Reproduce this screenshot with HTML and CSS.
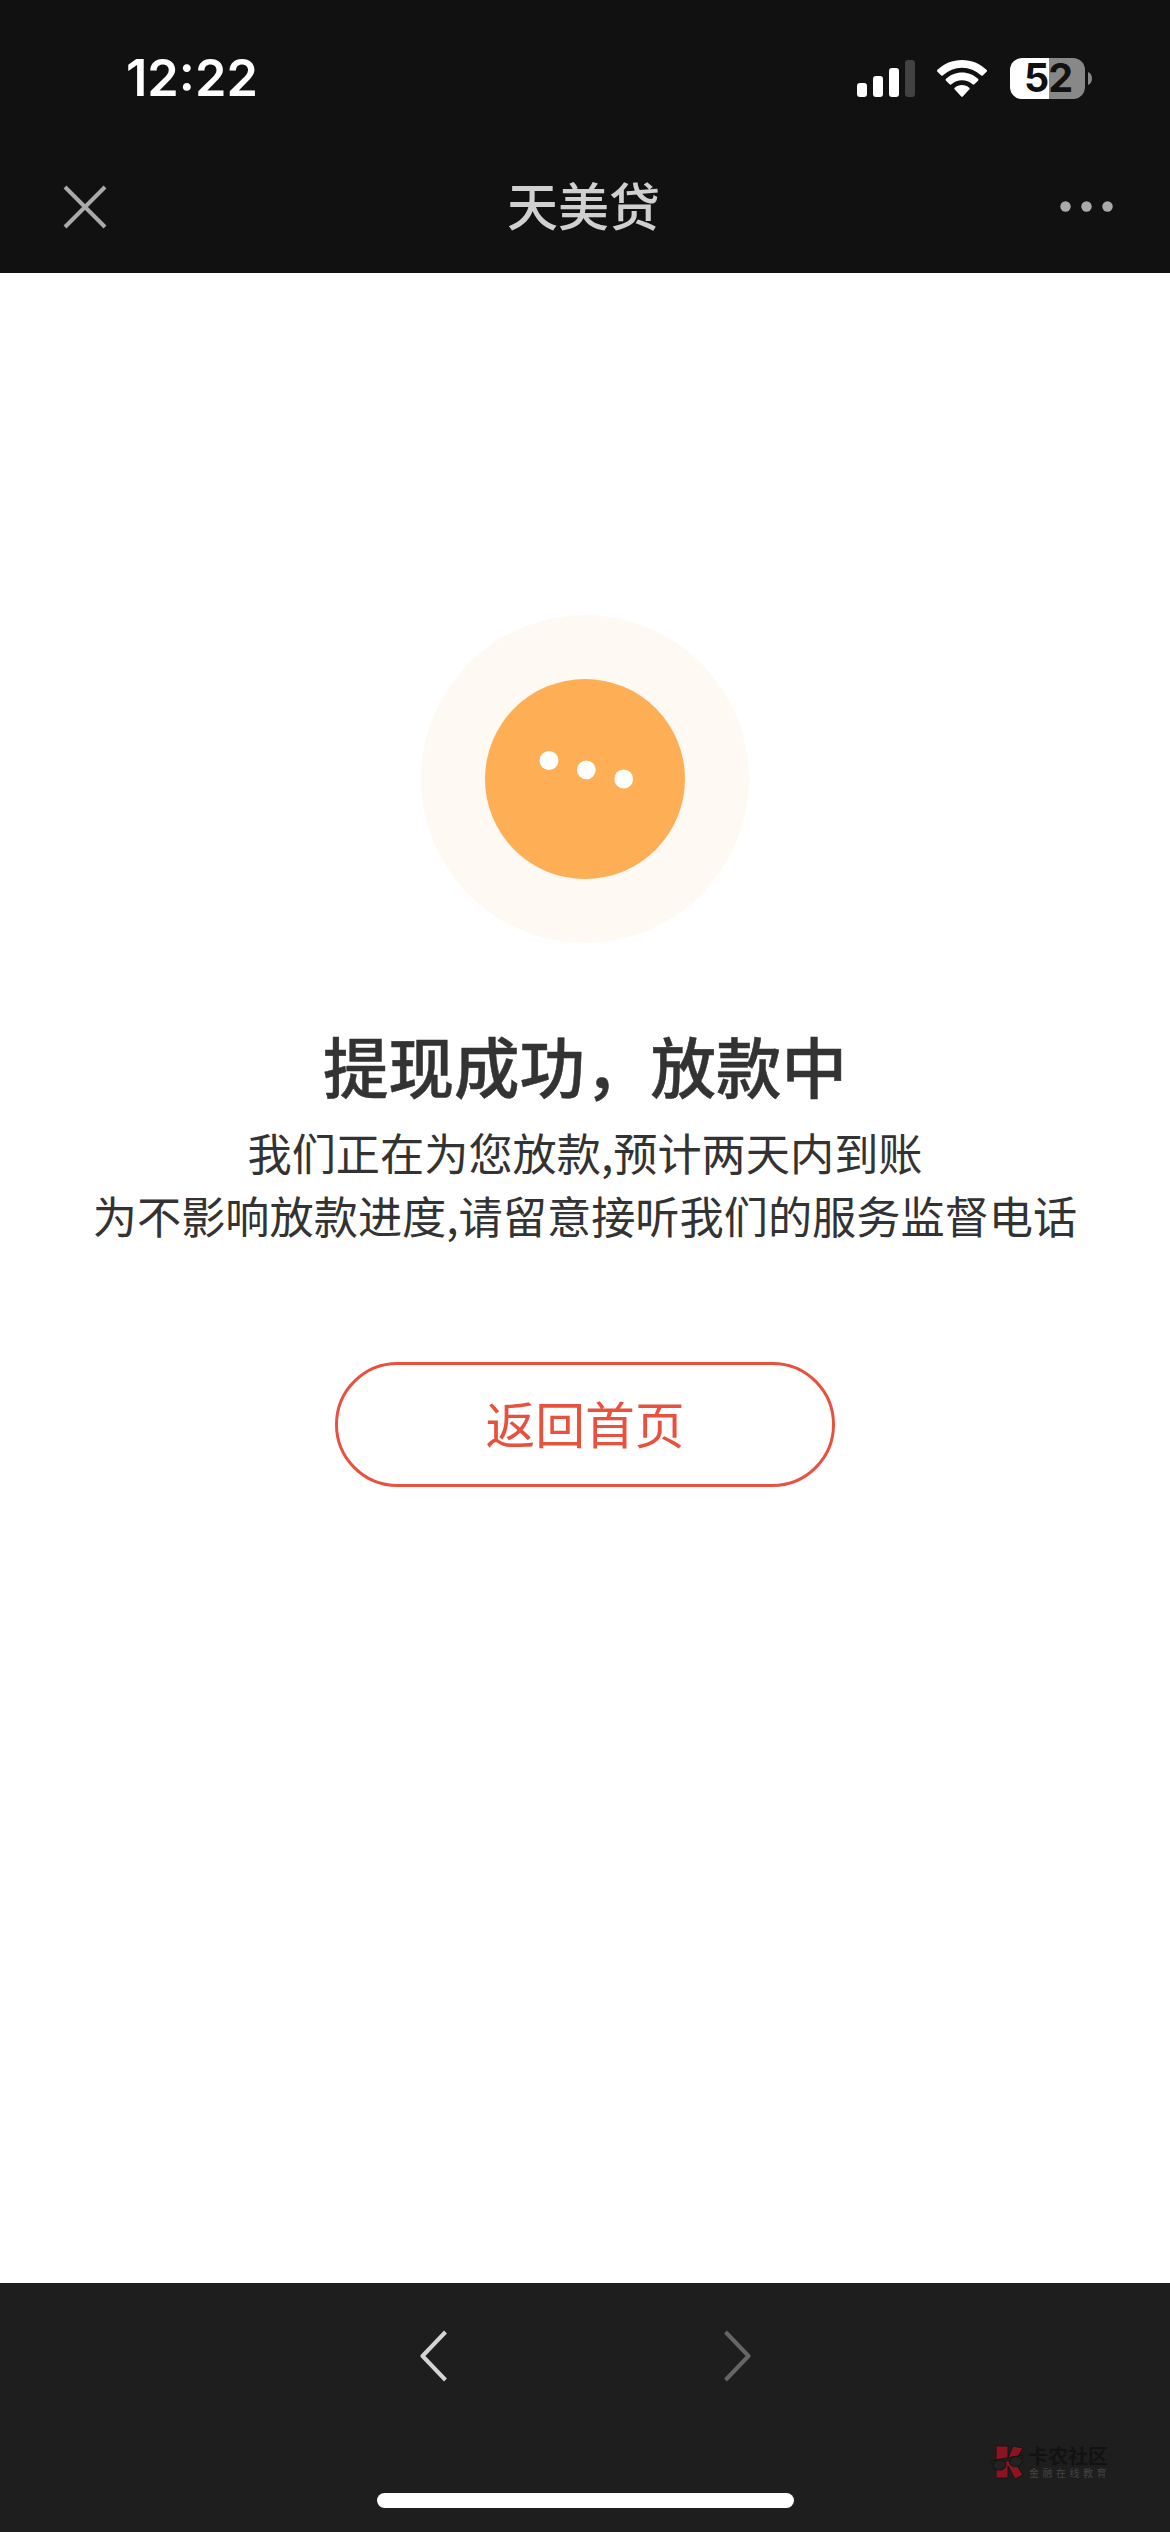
FILE: index.html
```html
<!DOCTYPE html>
<html lang="zh-CN">
<head>
<meta charset="utf-8">
<title>天美贷</title>
<link rel="stylesheet" href="styles.css">
</head>
<body>
<div class="screen">
  <header class="top">
    <div class="status">
      <time class="clock">12:22</time>
      <div class="indicators">
        <svg class="signal" viewBox="0 0 58 37" width="58" height="37">
          <rect x="0" y="23" width="10" height="14" rx="3"/>
          <rect x="16" y="16" width="10" height="21" rx="3"/>
          <rect x="32" y="8" width="10" height="29" rx="3"/>
          <rect class="dim" x="48" y="0" width="10" height="37" rx="3"/>
        </svg>
        <svg class="wifi" viewBox="0 0 50 37" width="50" height="37">
          <path d="M25 0C15.500 0 6.800 3.700.5 9.800a1.400 1.400 0 0 0 0 2L4 15.300a1.400 1.400 0 0 0 2 0A27.500 27.500 0 0 1 44 15.300a1.400 1.400 0 0 0 2 0l3.500-3.500a1.400 1.400 0 0 0 0-2C43.200 3.700 34.500 0 25 0Z"/>
          <path d="M25 12.500c-6.200 0-11.800 2.400-16 6.300a1.400 1.400 0 0 0 0 2l3.600 3.500a1.400 1.400 0 0 0 1.900 0 15.500 15.500 0 0 1 21 0 1.400 1.400 0 0 0 1.900 0l3.600-3.500a1.400 1.400 0 0 0 0-2c-4.200-3.900-9.800-6.300-16-6.300Z"/>
          <path d="M25 25c-2.800 0-5.300 1-7.200 2.700a1.300 1.300 0 0 0 0 1.900L24 36.200a1.400 1.400 0 0 0 2 0l6.200-6.600a1.300 1.300 0 0 0 0-1.900C30.300 26 27.800 25 25 25Z"/>
        </svg>
        <div class="battery">
          <span class="level">52</span>
          <svg viewBox="0 0 4 13" width="4" height="13"><path d="M0 0C5.300 2 5.300 11 0 13Z"/></svg>
        </div>
      </div>
    </div>
    <nav class="titlebar">
      <svg class="close" viewBox="0 0 44 44" width="44" height="44"><path d="M2 2 42 42M42 2 2 42"/></svg>
      <h1 class="title">天美贷</h1>
      <svg class="more" viewBox="0 0 53 11" width="53" height="11"><circle cx="5.500" cy="5.500" r="5.200"/><circle cx="26.500" cy="5.500" r="5.200"/><circle cx="47.500" cy="5.500" r="5.200"/></svg>
    </nav>
  </header>
  <main class="result">
    <svg class="badge" viewBox="0 0 328 328" width="328" height="328">
      <circle class="halo" cx="164" cy="164" r="164"/>
      <circle class="disc" cx="164" cy="164" r="100"/>
      <circle class="dot" cx="128" cy="145.500" r="9.400"/>
      <circle class="dot" cx="165.300" cy="154.800" r="9.400"/>
      <circle class="dot" cx="202.700" cy="164" r="9.400"/>
    </svg>
    <h2 class="heading">提现成功，放款中</h2>
    <p class="note">我们正在为您放款,预计两天内到账<br>为不影响放款进度,请留意接听我们的服务监督电话</p>
    <button class="home" type="button">返回首页</button>
  </main>
  <footer class="bottom">
    <div class="history">
      <svg class="back" viewBox="0 0 28 52" width="28" height="52"><path d="M25.500 2 2.500 26 25.500 50"/></svg>
      <svg class="forward" viewBox="0 0 28 52" width="28" height="52"><path d="M2.500 2 25.500 26 2.500 50"/></svg>
    </div>
    <div class="home-indicator"></div>
    <div class="watermark">
      <svg viewBox="0 0 36 38" width="36" height="38">
        <path class="k" d="M7 3h12v12L24 3l10 2-8 14 8 13-8 4-7-13v12H7Z"/>
        <g class="glasses">
          <path d="M1 18 34 12v3L1 21Z"/>
          <ellipse cx="10.500" cy="22" rx="6.500" ry="5" transform="rotate(-8 10.500 22)"/>
          <ellipse cx="27" cy="18.500" rx="6.500" ry="5" transform="rotate(-12 27 18.500)"/>
        </g>
      </svg>
      <div class="mark-text"><span class="mark-name">卡农社区</span><span class="mark-sub">金融在线教育</span></div>
    </div>
  </footer>
</div>
</body>
</html>
```

FILE: styles.css
```css
* { box-sizing: border-box; margin: 0; padding: 0; }
body { background: #fff; font-family: "Noto Sans CJK SC", sans-serif; }
svg { display: block; flex: none; }
.screen { width: 1170px; height: 2532px; display: flex; flex-direction: column; overflow: hidden; }

.top { height: 273px; background: #111; flex: none; }
.status { height: 156px; padding: 0 78px 0 126px; display: flex; justify-content: space-between; align-items: center; }
.clock { font: 600 50.500px/60px Inter, sans-serif; color: #fff; }
.indicators { display: flex; align-items: center; gap: 22px; }
.signal, .wifi { fill: #fff; }
.signal .dim { fill: #424242; }
.battery { display: flex; align-items: center; gap: 3px; margin-left: 1px; }
.battery svg { fill: #888; }
.level { width: 75px; height: 41px; border-radius: 12px; background: linear-gradient(90deg, #fff 39px, #888 39px); color: #111; font: 650 39.500px/41px Inter, sans-serif; text-align: center; padding-left: 1px; letter-spacing: -1px; }

.titlebar { height: 101px; padding: 0 57px 0 63px; display: flex; justify-content: space-between; align-items: center; }
.close { fill: none; stroke: #aaa; stroke-width: 4; }
.title { font-size: 51px; line-height: 76px; font-weight: 500; color: #d0d0d0; padding-bottom: 5px; }
.more { fill: #aaa; }

.result { flex: 1; display: flex; flex-direction: column; align-items: center; padding-top: 342px; text-align: center; color: #333; }
.halo { fill: #fef9f2; }
.disc { fill: #feae55; }
.dot { fill: #fff; }
.heading { margin: 73px 0 7px; font-size: 65.500px; line-height: 98px; font-weight: 500; -webkit-text-stroke: .5px #333; }
.note { font-size: 44.200px; line-height: 62.500px; white-space: nowrap; }
.home { margin-top: 116px; width: 500px; height: 125px; padding-bottom: 6px; border: 3px solid #e9513f; border-radius: 64px; background: #fff; color: #e9513f; font: 400 49.800px/74px "Noto Sans CJK SC", sans-serif; }

.bottom { position: relative; height: 249px; background: #1e1e1e; flex: none; display: flex; flex-direction: column; align-items: center; justify-content: space-between; padding: 47px 0 24px; }
.history { display: flex; gap: 275px; }
.history svg { fill: none; stroke-width: 4; stroke-linejoin: round; }
.back { stroke: #d5d5d5; }
.forward { stroke: #656565; }
.home-indicator { width: 417px; height: 15px; border-radius: 8px; background: #fff; }
.watermark { position: absolute; left: 989px; top: 160px; display: flex; align-items: center; gap: 3px; }
.k { fill: #8c1420; stroke: #151515; stroke-width: 1; }
.glasses { fill: #222; stroke: #141414; stroke-width: 1; }
.mark-text { display: flex; flex-direction: column; }
.mark-name { font-size: 20px; line-height: 21px; font-weight: 700; color: #121212; }
.mark-sub { font-size: 10px; line-height: 13px; letter-spacing: 3.500px; color: #444; padding-left: 1px; }
```
